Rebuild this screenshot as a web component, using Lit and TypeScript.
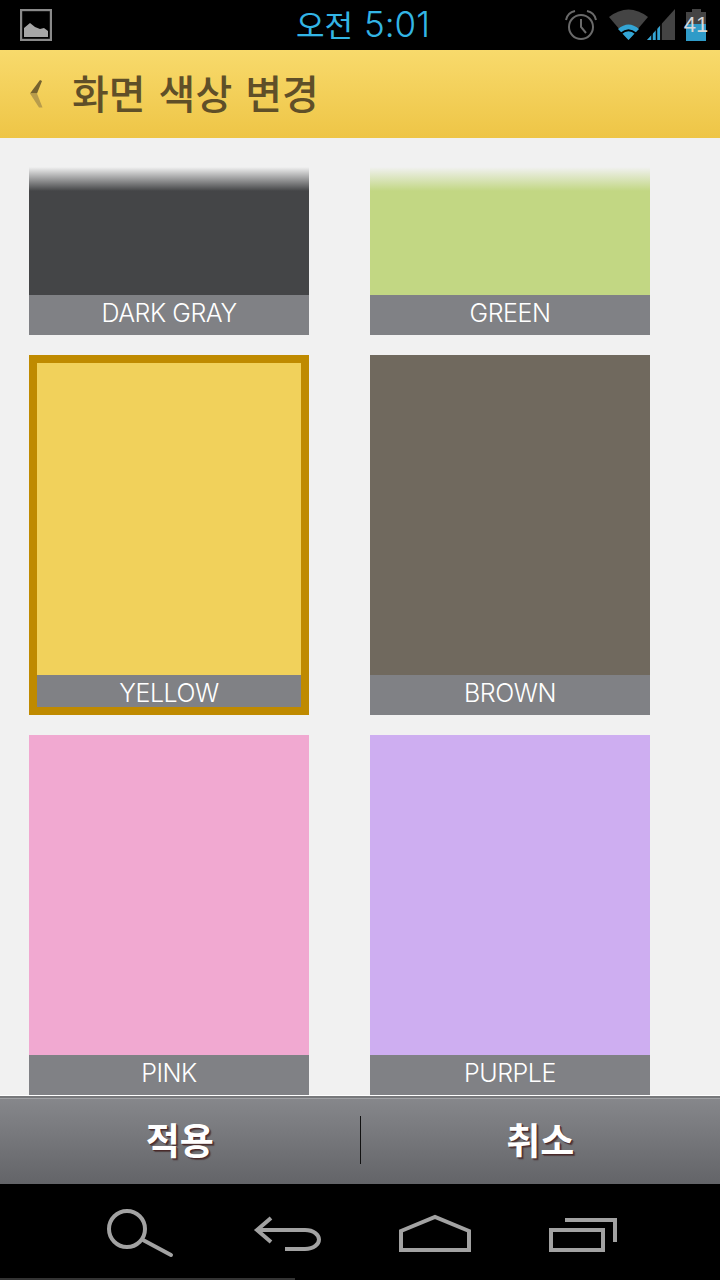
import { LitElement, html, css } from "lit";
import { customElement } from "lit/decorators.js";

@customElement("app-root")
export class AppRoot extends LitElement {
  static styles = css`
    :host { display: block; width: 720px; height: 1280px; overflow: hidden; font-family: "Noto Sans CJK KR", "Noto Sans", sans-serif; }
    .page { display: flex; flex-direction: column; height: 1280px; background: #f1f1f1; }
    .status { height: 50px; flex: none; background: #000; position: relative; display: flex; align-items: center; padding: 0 12px 0 20px; box-sizing: border-box; }
    .status svg { display: block; flex: none; }
    .time { position: absolute; left: 296px; top: 0; height: 50px; line-height: 47px; color: #33b5e5; font-size: 31px; white-space: nowrap; }
    .digits { font: 300 35px/47px Inter, "Liberation Sans", sans-serif; margin-left: 1px; }
    .right { margin-left: auto; display: flex; align-items: center; }
    .alarm { margin-right: 11px; }
    .bars { margin-right: 7px; }
    .batt { position: relative; width: 24px; height: 34px; }
    .batt span { position: absolute; left: -2px; right: -2px; top: 5px; text-align: center; font: 22px/24px "Liberation Sans", sans-serif; color: #d8d8d8; }
    .head { height: 88px; flex: none; background: linear-gradient(#f8da6c, #eec546); display: flex; align-items: center; padding-left: 29px; box-sizing: border-box; gap: 29px; }
    .title { color: #5f4f28; font-size: 40px; font-weight: 500; line-height: 88px; white-space: nowrap; margin-top: -4px; word-spacing: 4px; }
    .main { flex: 1; min-height: 0; overflow: hidden; padding: 29px 0 0 29px; box-sizing: border-box; display: grid; grid-template-columns: 280px 280px; column-gap: 61px; row-gap: 20px; align-content: start; }
    .card { display: flex; flex-direction: column; height: 360px; box-sizing: border-box; }
    .card.short { height: 168px; }
    .card.sel { border: 8px solid #bf8a00; }
    .swatch { flex: 1; position: relative; }
    .fade { position: absolute; left: 0; right: 0; top: 0; height: 24px; background: linear-gradient(#f1f1f1, rgba(241,241,241,0.45) 55%, rgba(241,241,241,0)); }
    .label { height: 40px; flex: none; background: #808185; color: #fff; text-align: center; font: 300 25px/36px Inter, "Liberation Sans", sans-serif; letter-spacing: -0.45px; }
    .sel .label { height: 32px; line-height: 36px; }
    .actions { height: 88px; flex: none; border-top: 1px solid #fff; display: flex; align-items: center; background: linear-gradient(#87888c, #636468); position: relative; box-shadow: inset 0 2px 0 #77787b, inset 0 3px 0 #a0a1a4; }
    .btn { flex: 1; text-align: center; color: #fff; font-size: 37px; font-weight: 700; text-shadow: 1px 1px 0 #4a2a2a, 2px 2px 1px rgba(60,30,30,.6); line-height: 48px; margin-top: -3px; }
    .divider { width: 1px; height: 48px; background: #111; flex: none; }
    .nav { height: 96px; flex: none; background: #000; position: relative; }
    .nav svg { display: block; }
    .nav .line { position: absolute; left: 0; bottom: 0; width: 295px; height: 2px; background: #333; }
  `;

  card(name: string, color: string, opts: { short?: boolean; sel?: boolean } = {}) {
    return html`<div class="card ${opts.short ? "short" : ""} ${opts.sel ? "sel" : ""}">
      <div class="swatch" style="background:${color}">${opts.short ? html`<div class="fade"></div>` : ""}</div>
      <div class="label">${name}</div>
    </div>`;
  }

  render() {
    return html`<div class="page">
      <div class="status">
        <svg width="32" height="32" viewBox="0 0 32 32">
          <rect x="1" y="1" width="30" height="30" fill="none" stroke="#8a8a8a" stroke-width="2.4"/>
          <path d="M4 28V19L10 14 15 18 20 20 24 19 28 22V28Z" fill="#a6a6a6"/>
        </svg>
        <div class="time">오전<span class="digits"> 5:01</span></div>
        <div class="right">
          <svg class="alarm" width="34" height="34" viewBox="0 0 34 34">
            <circle cx="17" cy="19" r="12" fill="none" stroke="#6a6a6a" stroke-width="2"/>
            <path d="M17 11V19L22 25" fill="none" stroke="#6a6a6a" stroke-width="2"/>
            <path d="M2 12C3 7 6 4 11 3M32 12C31 7 28 4 23 3" fill="none" stroke="#6a6a6a" stroke-width="2"/>
          </svg>
          <svg class="bars" width="68" height="34" viewBox="0 0 68 34">
            <path d="M0 9Q19.5 -6 39 9L19.5 32Z" fill="#444"/>
            <path d="M9 21Q19.5 12 30 21L19.5 32Z" fill="#33a5d5"/>
            <path d="M12 25.5Q19.5 19 27 25.5" fill="none" stroke="#000" stroke-width="2"/>
            <path d="M38 32L66 1V32Z" fill="#444"/>
            <path d="M38 32L51 18V32Z" fill="#33a5d5"/>
            <path d="M43 33V24M47.5 33V20M52 33V14" stroke="#000" stroke-width="1.5"/>
          </svg>
          <div class="batt">
            <svg width="24" height="34" viewBox="0 0 24 34">
              <path d="M8 1H17V4H22V16H2V4H8Z" fill="#444"/>
              <rect x="2" y="16" width="20" height="17" fill="#2f9bc8"/>
            </svg>
            <span>41</span>
          </div>
        </div>
      </div>
      <div class="head">
        <svg width="14" height="28" viewBox="0 0 14 28">
          <path d="M11 0L1 13.5 8 13.5 13 1Z" fill="#75622f"/>
          <path d="M1 13.5L10 27.5 13.5 27.5 8 13.5Z" fill="#b89c4c"/>
        </svg>
        <div class="title">화면 색상 변경</div>
      </div>
      <div class="main">
        ${this.card("DARK GRAY", "#444547", { short: true })}
        ${this.card("GREEN", "#c2d783", { short: true })}
        ${this.card("YELLOW", "#f1d15b", { sel: true })}
        ${this.card("BROWN", "#70695e")}
        ${this.card("PINK", "#f1a9d1")}
        ${this.card("PURPLE", "#ceaef1")}
      </div>
      <div class="actions">
        <div class="btn">적용</div>
        <div class="divider"></div>
        <div class="btn">취소</div>
      </div>
      <div class="nav">
        <svg width="720" height="96" viewBox="0 0 720 96">
          <g fill="none" stroke="#a2a2a2" stroke-width="4">
            <circle cx="127" cy="45" r="18"/>
            <path d="M143 56L171 71" stroke-linecap="round"/>
            <path d="M285 65H305C314 65 319 60 319 55.5C319 51 314 46 305 46H257"/>
            <path d="M271 34L257 46L271 58"/>
            <path d="M401 66V47L435 33L469 47V66Z"/>
            <path d="M551 46H603V66H551Z"/>
            <path d="M565 36H615V58"/>
          </g>
        </svg>
        <div class="line"></div>
      </div>
    </div>`;
  }
}
